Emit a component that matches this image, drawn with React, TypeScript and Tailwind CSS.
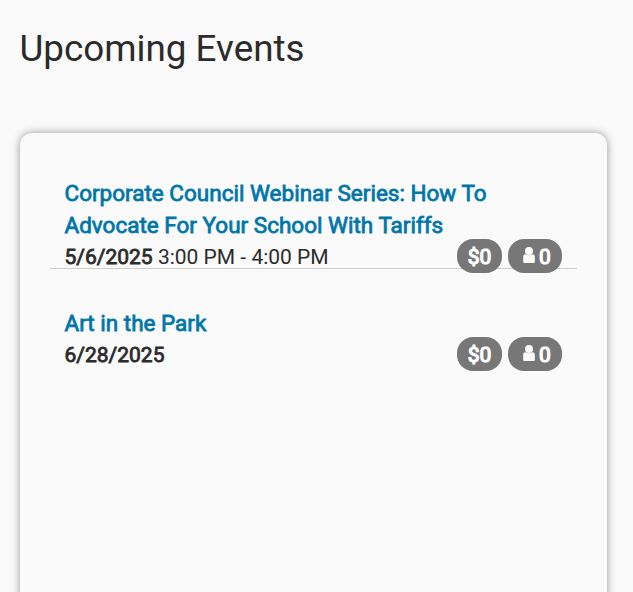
import React from 'react';

const events = [
    { title: 'Corporate Council Webinar Series: How To Advocate For Your School With Tariffs', date: '5/6/2025', time: '3:00 PM - 4:00 PM', price: '$0', attendees: 0 },
    { title: 'Art in the Park', date: '6/28/2025', time: '', price: '$0', attendees: 0 },
];

function PersonIcon() {
    return (
        <svg viewBox="0 0 12 16" className="-mt-[5px] h-4 w-3 fill-white">
            <circle cx="6" cy="4" r="4" />
            <path d="M2.500 7.200c2 1.500 5 1.500 7 0C11.200 7.200 11.800 8.500 11.800 10v4.400c0 1-.6 1.600-1.600 1.600H1.800C.8 16 .2 15.400 .2 14.400V10C.2 8.500 .8 7.200 2.500 7.200z" />
        </svg>
    );
}

export default function App() {
    return (
        <main className="h-[592px] overflow-hidden bg-[#fafafa] pl-5 pr-[26px] pt-[26px] font-[Roboto,sans-serif] text-[#2b2b2b]">
            <h1 className="-ml-[0.5px] text-[36.8px] leading-[46px] font-normal">Upcoming Events</h1>

            <section className="mt-[61px] h-[600px] rounded-xl bg-[#fafafa] px-[30px] pt-[30px] shadow-[0_0_8px_rgba(0,0,0,0.4)]">
                {events.map((event, i) => (
                    <article key={event.title} className={i === 0 ? 'h-[106px] border-b border-[#ccc] px-[15px] pt-3.5' : 'px-[15px] pt-[38px]'}>
                        <h2 className="-ml-[0.5px] mb-px w-[440px] text-[22.5px] leading-8 font-normal text-[#0076a8] [-webkit-text-stroke:0.8px_#0076a8]">{event.title}</h2>
                        <div className="-ml-[0.5px] flex h-[31px] justify-between text-[21px] leading-[31px]">
                            <p><b className="font-normal [-webkit-text-stroke:0.8px_#2b2b2b]">{event.date}</b> {event.time}</p>
                            <div className="-mt-[3px] flex gap-1.5 text-white [-webkit-text-stroke:1.2px_white]">
                                <span className="flex h-[34px] w-[45px] items-center justify-center rounded-2xl bg-[#777] pt-0.5">{event.price}</span>
                                <span className="flex h-[34px] w-[54px] items-center justify-center gap-1 rounded-2xl bg-[#777] pt-0.5 pl-1">
                                    <PersonIcon />
                                    {event.attendees}
                                </span>
                            </div>
                        </div>
                    </article>
                ))}
            </section>
        </main>
    );
}
